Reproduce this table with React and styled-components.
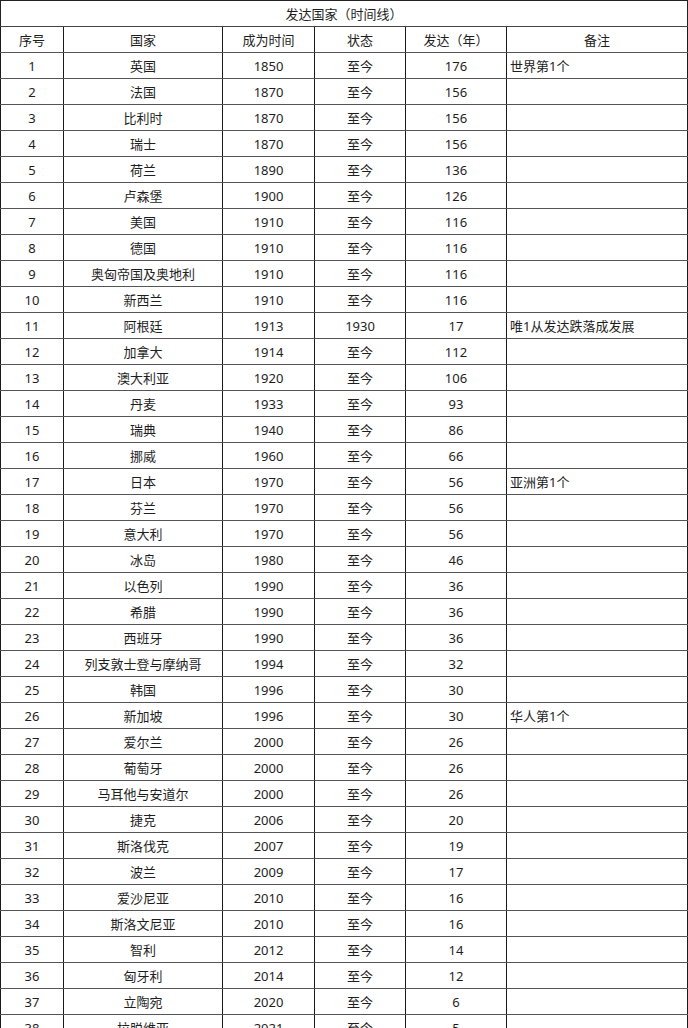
import styled, { createGlobalStyle } from "styled-components";

const rows = [
  ["英国", 1850, "至今", 176, "世界第1个"],
  ["法国", 1870, "至今", 156],
  ["比利时", 1870, "至今", 156],
  ["瑞士", 1870, "至今", 156],
  ["荷兰", 1890, "至今", 136],
  ["卢森堡", 1900, "至今", 126],
  ["美国", 1910, "至今", 116],
  ["德国", 1910, "至今", 116],
  ["奥匈帝国及奥地利", 1910, "至今", 116],
  ["新西兰", 1910, "至今", 116],
  ["阿根廷", 1913, "1930", 17, "唯1从发达跌落成发展"],
  ["加拿大", 1914, "至今", 112],
  ["澳大利亚", 1920, "至今", 106],
  ["丹麦", 1933, "至今", 93],
  ["瑞典", 1940, "至今", 86],
  ["挪威", 1960, "至今", 66],
  ["日本", 1970, "至今", 56, "亚洲第1个"],
  ["芬兰", 1970, "至今", 56],
  ["意大利", 1970, "至今", 56],
  ["冰岛", 1980, "至今", 46],
  ["以色列", 1990, "至今", 36],
  ["希腊", 1990, "至今", 36],
  ["西班牙", 1990, "至今", 36],
  ["列支敦士登与摩纳哥", 1994, "至今", 32],
  ["韩国", 1996, "至今", 30],
  ["新加坡", 1996, "至今", 30, "华人第1个"],
  ["爱尔兰", 2000, "至今", 26],
  ["葡萄牙", 2000, "至今", 26],
  ["马耳他与安道尔", 2000, "至今", 26],
  ["捷克", 2006, "至今", 20],
  ["斯洛伐克", 2007, "至今", 19],
  ["波兰", 2009, "至今", 17],
  ["爱沙尼亚", 2010, "至今", 16],
  ["斯洛文尼亚", 2010, "至今", 16],
  ["智利", 2012, "至今", 14],
  ["匈牙利", 2014, "至今", 12],
  ["立陶宛", 2020, "至今", 6],
  ["拉脱维亚", 2021, "至今", 5],
];

const headers = ["序号", "国家", "成为时间", "状态", "发达（年）", "备注"];
const widths = [63, 159, 92, 91, 101, 181];

const Global = createGlobalStyle`
  body {
    margin: 0;
    background: #fff;
    overflow: hidden;
  }
`;

const Page = styled.div`
  width: 688px;
  height: 1028px;
  overflow: hidden;
`;

const Table = styled.table`
  width: 687px;
  table-layout: fixed;
  border-collapse: collapse;
  font-family: "Noto Sans", "Noto Sans CJK SC", sans-serif;
  font-size: 13px;
  color: #1e1e1e;
`;

const Title = styled.td`
  height: 25px;
  padding: 0;
  text-align: center;
  border: 1px solid #222;
  border-bottom-color: #444;
`;

const Cell = styled.td`
  height: 25px;
  padding: 0 3px;
  white-space: nowrap;
  overflow: hidden;
  text-align: ${({ $left }) => ($left ? "left" : "center")};
  border-top: 1px solid #555;
  border-bottom: 1px solid #555;
  border-left: 1px solid #1a1a1a;
  border-right: 1px solid #1a1a1a;
`;

export default function App() {
  return (
    <Page>
      <Global />
      <Table>
        <colgroup>
          {widths.map((w, i) => (
            <col key={i} style={{ width: w }} />
          ))}
        </colgroup>
        <tbody>
          <tr>
            <Title colSpan={6}>发达国家（时间线）</Title>
          </tr>
          <tr>
            {headers.map((h) => (
              <Cell key={h}>{h}</Cell>
            ))}
          </tr>
          {rows.map((r, i) => (
            <tr key={i}>
              <Cell>{i + 1}</Cell>
              <Cell>{r[0]}</Cell>
              <Cell>{r[1]}</Cell>
              <Cell>{r[2]}</Cell>
              <Cell>{r[3]}</Cell>
              <Cell $left>{r[4] || ""}</Cell>
            </tr>
          ))}
        </tbody>
      </Table>
    </Page>
  );
}
